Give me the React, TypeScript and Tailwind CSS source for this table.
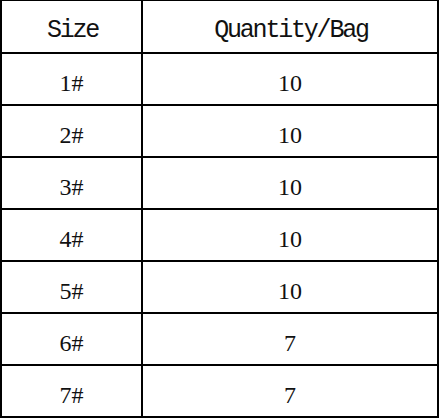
import React from "react";

const rows: [string, string][] = [
  ["1#", "10"],
  ["2#", "10"],
  ["3#", "10"],
  ["4#", "10"],
  ["5#", "10"],
  ["6#", "7"],
  ["7#", "7"],
];

export default function App() {
  return (
    <div className="w-[442px] h-[419px] bg-white">
      <div className="w-[439px] border-l-2 border-r-2 border-t border-black text-[#111]">
        <div
          className="flex h-[53px] border-b-2 border-black text-[25px] tracking-[-2.2px]"
          style={{ fontFamily: '"Liberation Mono", "DejaVu Sans Mono", monospace' }}
        >
          <div className="w-[141px] border-r-2 border-black flex items-center justify-center pt-[8px] pl-[2px]">Size</div>
          <div className="flex-1 flex items-center justify-center pt-[8px] pl-[2px]">Quantity/Bag</div>
        </div>
        {rows.map(([s, q]) => (
          <div
            key={s}
            className="flex h-[52px] border-b-2 border-black text-[24px]"
            style={{ fontFamily: '"Liberation Serif", "DejaVu Serif", serif' }}
          >
            <div className="w-[141px] border-r-2 border-black flex items-center justify-center pt-[8px]">{s}</div>
            <div className="flex-1 flex items-center justify-center pt-[8px]">{q}</div>
          </div>
        ))}
      </div>
    </div>
  );
}
